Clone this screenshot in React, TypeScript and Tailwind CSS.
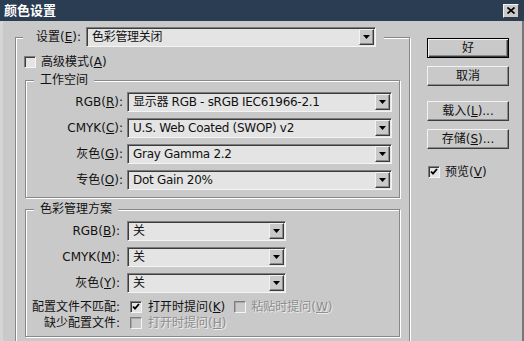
import React from 'react';

const FONT = "font-['DejaVu_Sans','Noto_Sans_CJK_SC',sans-serif]";

function U({ children }: { children: React.ReactNode }) {
  return <span className="underline decoration-1">{children}</span>;
}

function Arrow() {
  return (
    <div className="mr-[1px] flex h-[16px] w-[15px] shrink-0 items-center justify-center border border-t-[#f2f2f2] border-l-[#f2f2f2] border-b-[#3c3c3c] border-r-[#3c3c3c] bg-[#c9c9c9] shadow-[inset_-1px_-1px_0_#8a8a8a]">
      <svg width="7" height="4" viewBox="0 0 7 4">
        <path d="M0 0h7L3.5 4z" fill="#000" />
      </svg>
    </div>
  );
}

function Select({ value, w }: { value: string; w: string }) {
  return (
    <div
      className={`flex h-[20px] ${w} shrink-0 items-center border border-t-[#7c7c7c] border-l-[#7c7c7c] border-b-[#f4f4f4] border-r-[#f4f4f4] bg-[#e4e4e4] shadow-[inset_1px_1px_0_#3c3c3c]`}
    >
      <span className="flex-1 truncate pl-[5px] leading-[16px] tracking-[-0.3px]">{value}</span>
      <Arrow />
    </div>
  );
}

function Check({ checked, disabled }: { checked?: boolean; disabled?: boolean }) {
  return (
    <div
      className={`flex h-[12px] w-[12px] shrink-0 items-center justify-center border border-t-[#7c7c7c] border-l-[#7c7c7c] border-b-[#f4f4f4] border-r-[#f4f4f4] ${
        disabled ? 'bg-[#c9c9c9] shadow-[inset_1px_1px_0_#a8a8a8]' : 'bg-[#e4e4e4] shadow-[inset_1px_1px_0_#3c3c3c]'
      }`}
    >
      {checked && (
        <svg width="8" height="8" viewBox="0 0 8 8">
          <path d="M1 3.5l2 2.2L7 1" stroke="#000" strokeWidth="1.8" fill="none" />
        </svg>
      )}
    </div>
  );
}

function Button({ children, primary, className = '' }: { children: React.ReactNode; primary?: boolean; className?: string }) {
  return (
    <div
      className={`flex h-[20px] w-[82px] items-center justify-center bg-[#c9c9c9] ${
        primary
          ? 'border border-black shadow-[inset_1px_1px_0_#f2f2f2,inset_-1px_-1px_0_#3c3c3c,inset_-2px_-2px_0_#8a8a8a]'
          : 'border border-t-[#f2f2f2] border-l-[#f2f2f2] border-b-[#3c3c3c] border-r-[#3c3c3c] shadow-[inset_-1px_-1px_0_#8a8a8a]'
      } ${className}`}
    >
      {children}
    </div>
  );
}

function Group({ title, children, className = '' }: { title: string; children: React.ReactNode; className?: string }) {
  return (
    <fieldset className={`mx-[9px] border border-[#888] shadow-[inset_1px_1px_0_#fff,1px_1px_0_#fff] ${className}`}>
      <legend className="ml-[8px] h-[16px] bg-[#c9c9c9] px-[6px] leading-[16px]">{title}</legend>
      {children}
    </fieldset>
  );
}

function Row({ label, lw, children }: { label: React.ReactNode; lw: string; children: React.ReactNode }) {
  return (
    <div className="flex h-[20px] items-center">
      <span className={`${lw} shrink-0 whitespace-nowrap text-right`}>{label}</span>
      {children}
    </div>
  );
}

const dim = 'text-[#8e8e8e] [text-shadow:1px_1px_0_#ececec]';

export default function App() {
  return (
    <div className={`h-[341px] w-[524px] overflow-hidden bg-[#c9c9c9] text-[12px] leading-[16px] text-[#111] ${FONT}`}>
      {/* Title bar */}
      <div className="flex h-[21px] items-center justify-between bg-[#2a3d52] pl-[4px] pr-[5px]">
        <span className="text-[13px] font-bold text-white">颜色设置</span>
        <div className="flex h-[14px] w-[16px] items-center justify-center border border-t-[#f2f2f2] border-l-[#f2f2f2] border-b-[#3c3c3c] border-r-[#3c3c3c] bg-[#c9c9c9]">
          <svg width="8" height="7" viewBox="0 0 8 7">
            <path d="M0.5 0.5l7 6M7.5 0.5l-7 6" stroke="#000" strokeWidth="1.7" />
          </svg>
        </div>
      </div>

      <div className="flex h-[320px] border-l-[3px] border-r-[2px] border-l-[#d5d5d5] border-r-[#777] pl-[12px] pt-[6px]">
        {/* Main group */}
        <fieldset className="h-[340px] w-[395px] shrink-0 border border-[#888] shadow-[inset_1px_1px_0_#fff,1px_1px_0_#fff]">
          <legend className="ml-[7px] bg-[#c9c9c9] pl-[13px] pr-[8px]">
            <div className="flex h-[20px] items-center">
              <span className="w-[50px] shrink-0 whitespace-nowrap">
                设置(<U>E</U>):
              </span>
              <Select value="色彩管理关闭" w="w-[290px]" />
            </div>
          </legend>

          <div className="ml-[8px] mt-[7px] flex h-[16px] items-center">
            <Check />
            <span className="ml-[5px]">
              高级模式(<U>A</U>)
            </span>
          </div>

          <Group title="工作空间" className="mt-[2px] pb-[7px]">
            <div className="flex flex-col gap-[6px] pt-[4px]">
              <Row lw="w-[97px]" label={<>RGB(<U>R</U>):</>}>
                <Select value="显示器 RGB - sRGB IEC61966-2.1" w="ml-[4px] w-[265px]" />
              </Row>
              <Row lw="w-[97px]" label={<>CMYK(<U>C</U>):</>}>
                <Select value="U.S. Web Coated (SWOP) v2" w="ml-[4px] w-[265px]" />
              </Row>
              <Row lw="w-[97px]" label={<>灰色(<U>G</U>):</>}>
                <Select value="Gray Gamma 2.2" w="ml-[4px] w-[265px]" />
              </Row>
              <Row lw="w-[97px]" label={<>专色(<U>O</U>):</>}>
                <Select value="Dot Gain 20%" w="ml-[4px] w-[265px]" />
              </Row>
            </div>
          </Group>

          <Group title="色彩管理方案" className="mt-[3px] pb-[5px]">
            <div className="flex flex-col gap-[6px] pt-[4px]">
              <Row lw="w-[94px]" label={<>RGB(<U>B</U>):</>}>
                <Select value="关" w="ml-[7px] w-[159px]" />
              </Row>
              <Row lw="w-[94px]" label={<>CMYK(<U>M</U>):</>}>
                <Select value="关" w="ml-[7px] w-[159px]" />
              </Row>
              <Row lw="w-[94px]" label={<>灰色(<U>Y</U>):</>}>
                <Select value="关" w="ml-[7px] w-[159px]" />
              </Row>
            </div>
            <div className="mt-[6px] flex h-[16px] items-center">
              <span className="w-[94px] shrink-0 whitespace-nowrap text-right">配置文件不匹配:</span>
              <div className="ml-[10px] flex items-center">
                <Check checked />
                <span className="ml-[6px]">
                  打开时提问(<U>K</U>)
                </span>
              </div>
              <div className="ml-[9px] flex items-center">
                <Check disabled />
                <span className={`ml-[5px] ${dim}`}>
                  粘贴时提问(<U>W</U>)
                </span>
              </div>
            </div>
            <div className="flex h-[16px] items-center">
              <span className="w-[94px] shrink-0 whitespace-nowrap text-right">缺少配置文件:</span>
              <div className="ml-[10px] flex items-center">
                <Check disabled />
                <span className={`ml-[6px] ${dim}`}>
                  打开时提问(<U>H</U>)
                </span>
              </div>
            </div>
          </Group>
        </fieldset>

        {/* Buttons */}
        <div className="ml-[17px] mt-[11px] flex w-[82px] shrink-0 flex-col">
          <Button primary>好</Button>
          <Button className="mt-[8px]">取消</Button>
          <Button className="mt-[15px]">
            载入(<U>L</U>)...
          </Button>
          <Button className="mt-[8px]">
            存储(<U>S</U>)...
          </Button>
          <div className="ml-[1px] mt-[15px] flex h-[16px] items-center">
            <Check checked />
            <span className="ml-[5px]">
              预览(<U>V</U>)
            </span>
          </div>
        </div>
      </div>
    </div>
  );
}
